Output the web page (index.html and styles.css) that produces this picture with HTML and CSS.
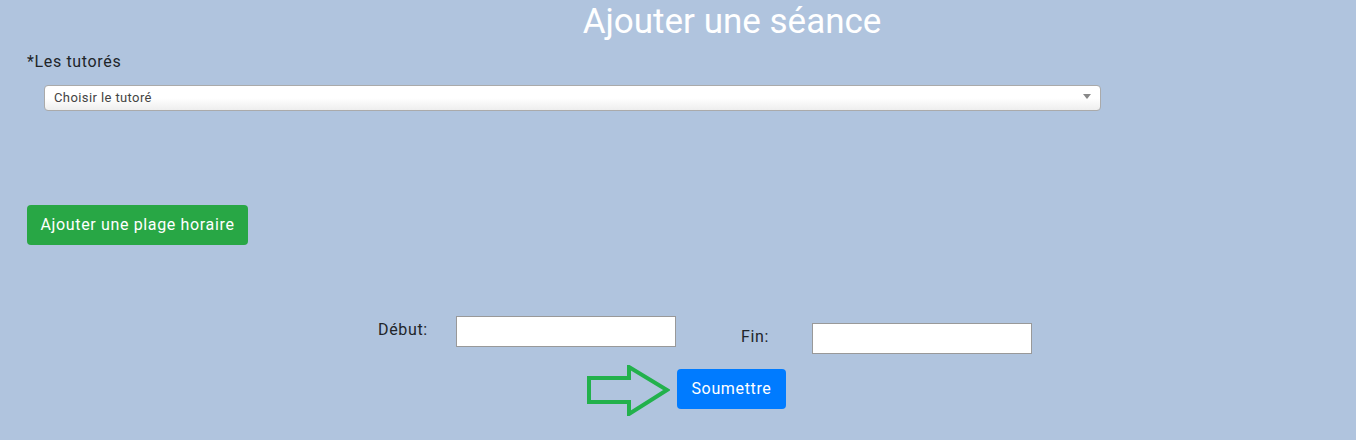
FILE: index.html
```html
<!DOCTYPE html>
<html lang="fr">
<head>
<meta charset="utf-8">
<title>Ajouter une séance</title>
<link rel="stylesheet" href="styles.css">
</head>
<body>
<div class="page">
  <h1 class="title">Ajouter une séance</h1>
  <div class="field-label">*Les tutorés</div>
  <div class="select">
    <span class="select-text">Choisir le tutoré</span>
    <span class="select-arrow"></span>
  </div>
  <button class="btn btn-green" type="button">Ajouter une plage horaire</button>
  <div class="times">
    <div class="time-group">
      <label class="time-label time-label-start">Début:</label>
      <input class="time-input" type="text">
    </div>
    <div class="time-group time-group-end">
      <label class="time-label time-label-end">Fin:</label>
      <input class="time-input" type="text">
    </div>
  </div>
  <div class="submit-row">
    <svg class="arrow" width="84" height="51" viewBox="0 0 84 51" aria-hidden="true">
      <polygon points="3,13 43,13 43,2 81,25 43,49 43,37 3,37" fill="none" stroke="#22b14c" stroke-width="4" stroke-linejoin="miter"/>
    </svg>
    <button class="btn btn-blue" type="submit">Soumettre</button>
  </div>
</div>
</body>
</html>
```

FILE: styles.css
```css
html, body {
  margin: 0;
  padding: 0;
}
body {
  background: #b0c4de;
  font-family: Roboto, "Liberation Sans", Arial, sans-serif;
  color: #212529;
  height: 440px;
  overflow: hidden;
}
.page {
  padding: 0 27px;
}
.title {
  margin: 0;
  padding-left: 108px;
  font-size: 35px;
  line-height: 43px;
  font-weight: 400;
  color: #ffffff;
  text-align: center;
}
.field-label {
  margin-top: 7px;
  font-size: 16px;
  line-height: 24px;
  letter-spacing: 0.65px;
}
.select {
  position: relative;
  box-sizing: border-box;
  margin: 11px 0 0 17px;
  width: 1057px;
  height: 26px;
  border: 1px solid #aaa;
  border-radius: 4px;
  background: linear-gradient(to bottom, #ffffff 50%, #eeeeee 100%);
  display: flex;
  align-items: center;
  padding-left: 9px;
}
.select-text {
  font-size: 13px;
  line-height: 24px;
  letter-spacing: 0.4px;
  color: #444;
}
.select-arrow {
  position: absolute;
  right: 9px;
  top: 8px;
  width: 0;
  height: 0;
  border-left: 4px solid transparent;
  border-right: 4px solid transparent;
  border-top: 5px solid #888;
}
.btn {
  display: inline-block;
  box-sizing: border-box;
  height: 40px;
  border: 0;
  border-radius: 4px;
  font-family: inherit;
  font-size: 16px;
  line-height: 24px;
  letter-spacing: 0.65px;
  color: #fff;
  padding: 8px 12px;
  cursor: pointer;
}
.btn-green {
  margin-top: 94px;
  width: 221px;
  background: #28a745;
  display: block;
}
.btn-blue {
  width: 109px;
  background: #007bff;
  margin-left: 7px;
  padding: 8px 0;
}
.times {
  display: flex;
  align-items: flex-start;
  margin-top: 71px;
  padding-left: 351px;
  gap: 65px;
}
.time-group {
  display: flex;
  align-items: flex-start;
}
.time-group-end {
  margin-top: 7px;
}
.time-label {
  font-size: 16px;
  line-height: 24px;
  letter-spacing: 0.65px;
  padding-top: 2px;
  color: #212529;
}
.time-label-start {
  width: 78px;
}
.time-label-end {
  width: 71px;
}
.time-input {
  box-sizing: border-box;
  width: 220px;
  height: 31px;
  margin: 0;
  border: 1px solid #999;
  background: #fff;
  padding: 0 4px;
  font-family: inherit;
  font-size: 16px;
}
.submit-row {
  display: flex;
  align-items: flex-start;
  margin-top: 15px;
  padding-left: 559px;
}
.arrow {
  display: block;
  margin-top: -4px;
}
```
